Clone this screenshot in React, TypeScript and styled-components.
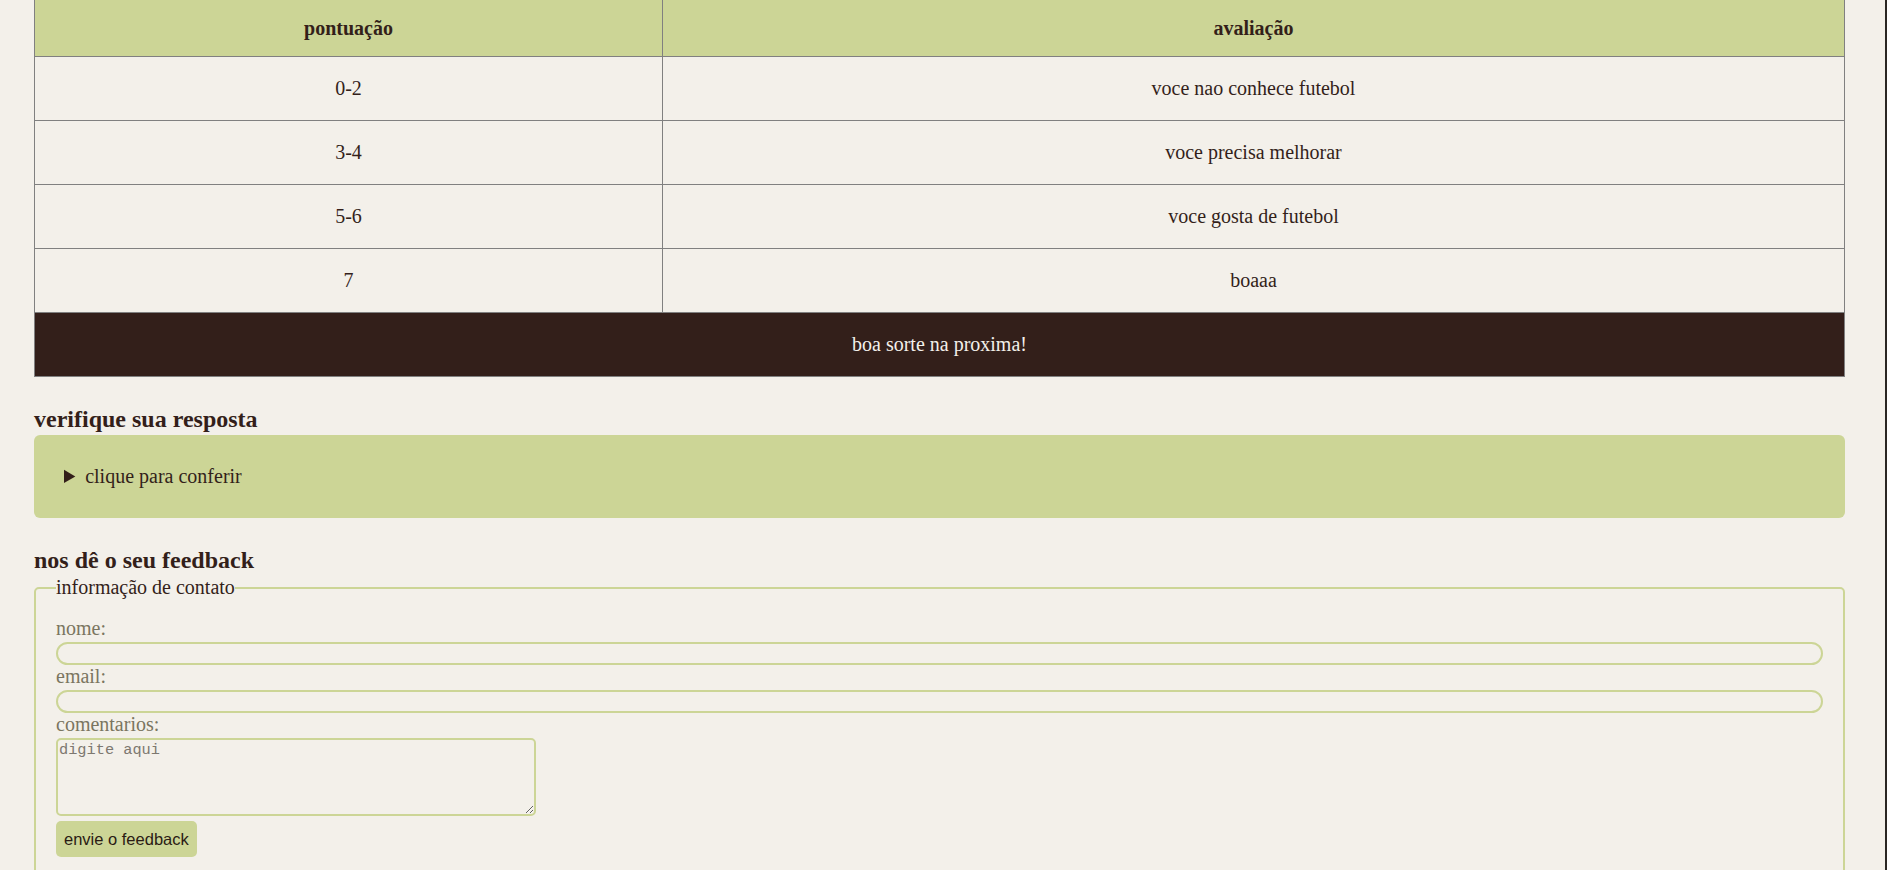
import styled, { createGlobalStyle } from "styled-components";

const GlobalStyle = createGlobalStyle`
  html {
    border-right: 2px solid #2a2623;
    background-color: #f3f0ea;
  }
  body {
    margin: 0;
    background-color: #f3f0ea;
    color: #331f1a;
    font-family: "Liberation Serif", "Times New Roman", serif;
    font-size: 20px;
  }
`;

const Page = styled.main`
  padding: 0 40px 0 34px;
`;

const ScoreTable = styled.table`
  width: 100%;
  border-collapse: collapse;
  border: 1px solid #808080;
  border-top: none;
`;

const HeadCell = styled.th<{ $wide?: boolean }>`
  background-color: #ccd596;
  height: 56px;
  padding: 0;
  font-weight: bold;
  text-align: center;
  border: 1px solid #808080;
  border-top: none;
  width: ${(props) => (props.$wide ? "auto" : "627px")};
`;

const Cell = styled.td`
  height: 63px;
  padding: 0;
  text-align: center;
  border: 1px solid #808080;
`;

const FootCell = styled.td`
  height: 63px;
  padding: 0;
  text-align: center;
  background-color: #331f1a;
  color: #f3f0ea;
  border: 1px solid #808080;
`;

const SectionTitle = styled.h3`
  font-size: 24px;
  font-weight: bold;
  line-height: 27px;
  margin: 29px 0 2px;
`;

const AnswerBox = styled.details`
  background-color: #ccd596;
  border-radius: 6px;
  padding: 30px 30px;
  line-height: 23px;
`;

const Summary = styled.summary`
  cursor: pointer;
`;

const FeedbackForm = styled.fieldset`
  margin: 0;
  border: 2px solid #ccd596;
  border-radius: 5px;
  padding: 18px 20px 0;
  min-height: 300px;
`;

const Legend = styled.legend`
  padding: 0;
  line-height: 23px;
`;

const FieldLabel = styled.label`
  display: block;
  color: #7a7560;
  line-height: 23px;
`;

const TextInput = styled.input`
  display: block;
  box-sizing: border-box;
  width: 100%;
  height: 23px;
  margin: 2px 0 0;
  border: 2px solid #ccd596;
  border-radius: 20px;
  background: transparent;
  outline: none;
`;

const Comments = styled.textarea`
  display: block;
  box-sizing: border-box;
  width: 480px;
  height: 78px;
  margin: 2px 0 0;
  padding: 1px 1px;
  border: 2px solid #ccd596;
  border-radius: 5px;
  background: transparent;
  font-family: "Liberation Mono", "DejaVu Sans Mono", monospace;
  font-size: 15.3px;
  color: #331f1a;
  outline: none;

  &::placeholder {
    color: #7d7870;
  }
`;

const SendButton = styled.button`
  display: block;
  margin-top: 5px;
  height: 36px;
  padding: 0 8px;
  border: none;
  border-radius: 5px;
  background-color: #ccd596;
  color: #2a1b14;
  font-family: "Liberation Sans", Arial, sans-serif;
  font-size: 16.5px;
  cursor: pointer;
`;

const rows = [
  { score: "0-2", text: "voce nao conhece futebol" },
  { score: "3-4", text: "voce precisa melhorar" },
  { score: "5-6", text: "voce gosta de futebol" },
  { score: "7", text: "boaaa" },
];

export default function App() {
  return (
    <>
      <GlobalStyle />
      <Page>
        <ScoreTable>
          <thead>
            <tr>
              <HeadCell>pontuação</HeadCell>
              <HeadCell $wide>avaliação</HeadCell>
            </tr>
          </thead>
          <tbody>
            {rows.map((row) => (
              <tr key={row.score}>
                <Cell>{row.score}</Cell>
                <Cell>{row.text}</Cell>
              </tr>
            ))}
          </tbody>
          <tfoot>
            <tr>
              <FootCell colSpan={2}>boa sorte na proxima!</FootCell>
            </tr>
          </tfoot>
        </ScoreTable>

        <SectionTitle>verifique sua resposta</SectionTitle>
        <AnswerBox>
          <Summary>clique para conferir</Summary>
        </AnswerBox>

        <SectionTitle>nos dê o seu feedback</SectionTitle>
        <FeedbackForm>
          <Legend>informação de contato</Legend>
          <FieldLabel htmlFor="nome">nome:</FieldLabel>
          <TextInput id="nome" type="text" />
          <FieldLabel htmlFor="email">email:</FieldLabel>
          <TextInput id="email" type="email" />
          <FieldLabel htmlFor="comentarios">comentarios:</FieldLabel>
          <Comments id="comentarios" placeholder="digite aqui" />
          <SendButton type="button">envie o feedback</SendButton>
        </FeedbackForm>
      </Page>
    </>
  );
}
